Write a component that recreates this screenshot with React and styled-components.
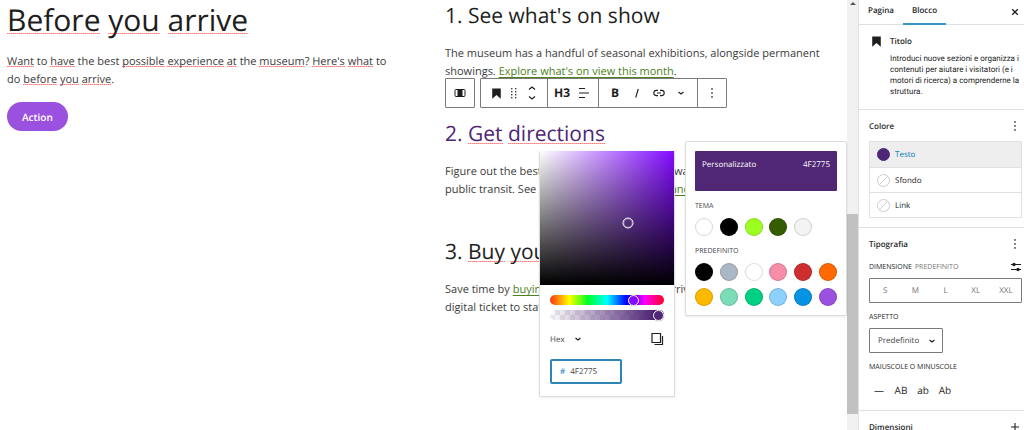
import React, { useState } from "react";
import styled, { createGlobalStyle, css } from "styled-components";

const Theme = {
  Ink: "#1e1e1e",
  Body: "#3c3c3c",
  Purple: "#4f2775",
  Action: "#9b51e0",
  Blue: "#007cba",
  Green: "#4c8020",
  Line: "#e0e0e0",
  Outline: "#7a7a7a",
  Grey: "#757575",
};

const GlobalStyle = createGlobalStyle`
  * {
    box-sizing: border-box;
  }

  body {
    margin: 0;
    overflow: hidden;
    background: #fff;
    color: ${Theme.Ink};
    font-family: "Open Sans", "Noto Sans", sans-serif;
    text-rendering: geometricPrecision;
  }

  h1, h2, h3, p, fieldset {
    margin: 0;
    padding: 0;
    border: 0;
  }

  button, input, select {
    margin: 0;
    padding: 0;
    border: 0;
    background: none;
    color: inherit;
    font: inherit;
    text-rendering: inherit;
  }
`;

const Editor = styled.div`
  display: flex;
  height: 100vh;
`;

const Canvas = styled.main`
  position: relative;
  flex: 1;
  display: grid;
  grid-template-columns: 1fr 1fr;
  gap: 56px;
  align-items: start;
  padding: 0 20px 0 7px;
`;

const Title = styled.h1`
  font-size: 30px;
  font-weight: 400;
  line-height: 40px;
`;

const Heading = styled.h2`
  position: relative;
  font-size: 21px;
  font-weight: 400;
  line-height: 30px;
  color: ${(props) => props.$color || Theme.Ink};
`;

const Paragraph = styled.p`
  margin-top: ${(props) => (props.$tight ? "13px" : "14px")};
  font-size: 11px;
  line-height: 18px;
  color: ${Theme.Body};

  & a {
    color: ${Theme.Green};
    text-underline-offset: 2px;
    text-decoration-skip-ink: none;
  }
`;

const Typo = styled.span`
  background: linear-gradient(to right, #ff7b7b 50%, #ffb0b0 50%) 0
    calc(100% - 0.2em) / 2px 1px repeat-x;
`;

const ActionButton = styled.button`
  margin-top: 13px;
  padding: 0 15px;
  height: 29px;
  border-radius: 15px;
  background: ${Theme.Action};
  color: #fff;
  font-size: 10px;
  font-weight: 600;
`;

const Steps = styled.div`
  display: grid;
  gap: 38px;
  padding-top: 1px;
`;

// toolbar

const Toolbar = styled.div`
  position: absolute;
  left: 0;
  bottom: 41px;
  display: flex;
  gap: 5px;
  color: ${Theme.Ink};
`;

const ToolbarBox = styled.div`
  display: flex;
  height: 30px;
  border: 1px solid ${Theme.Outline};
  border-radius: 1px;
  background: #fff;
`;

const ToolbarGroup = styled.div`
  display: flex;
  align-items: center;
  padding: 0 ${(props) => props.$pad || 3}px;

  & + & {
    border-left: 1px solid ${Theme.Outline};
  }
`;

const Tool = styled.button`
  display: flex;
  align-items: center;
  justify-content: center;
  width: ${(props) => (props.$narrow ? 18 : 22)}px;
  height: 28px;
  font-size: 12px;
  font-weight: 700;
  line-height: 28px;
`;

// popovers

const popover = css`
  position: absolute;
  border: 1px solid #dcdcdc;
  border-radius: 2px;
  background: #fff;
  box-shadow: 0 1px 3px rgba(0, 0, 0, 0.08);
`;

const Picker = styled.section`
  ${popover}
  top: 151px;
  right: 172px;
  width: 136px;
  border-top: 0;
`;

const Saturation = styled.div`
  position: relative;
  height: 134px;
  background: linear-gradient(to top, #000, transparent),
    linear-gradient(to right, #fff, transparent), #820cff;
`;

const Pointer = styled.span`
  position: absolute;
  width: 11px;
  height: 11px;
  border: 1px solid #fff;
  border-radius: 50%;
  box-shadow: inset 0 0 0 1px rgba(255, 255, 255, 0.3);
  transform: translate(-50%, -50%);
`;

const PickerBody = styled.div`
  display: grid;
  gap: 5px;
  padding: 10px 10px 12px;
`;

const Slider = styled.input`
  display: block;
  width: 100%;
  height: 10px;
  border-radius: 5px;
  appearance: none;
  background: ${(props) => props.$track};

  &::-webkit-slider-thumb {
    appearance: none;
    width: 11px;
    height: 11px;
    border: 1px solid #fff;
    border-radius: 50%;
    background: ${(props) => props.$thumb};
    box-shadow: 0 0 1px rgba(0, 0, 0, 0.5);
  }
`;

const hueTrack =
  "linear-gradient(to right, #f31 0%, #ff0 17%, #0f2 33%, #0ff 50%, #00f 67%, #f0f 83%, #f02 100%)";
const alphaTrack = `linear-gradient(to right, transparent, ${Theme.Purple} 90%), repeating-conic-gradient(#ebebeb 0 25%, #fff 0 50%) 0 0 / 10px 10px`;

const FormatRow = styled.div`
  display: flex;
  align-items: center;
  justify-content: space-between;
  margin-top: 7px;
  height: 14px;
`;

const CopyButton = styled.button`
  display: flex;
`;

const SelectBox = styled.span`
  display: inline-flex;
  align-items: center;
  gap: ${(props) => props.$gap || 0}px;
  font-size: 8px;

  & select {
    appearance: none;
    field-sizing: content;
    color: #444;
  }

  & svg {
    flex: none;
  }
`;

const HexField = styled.label`
  display: flex;
  align-items: center;
  gap: 5px;
  margin-top: 8px;
  padding: 0 8px;
  width: 72px;
  height: 25px;
  border: 2px solid #2f86b5;
  border-radius: 2px;
  font-size: 8px;
  color: ${Theme.Blue};

  & input {
    width: 100%;
    min-width: 0;
    color: #444;
  }
`;

const Palette = styled.section`
  ${popover}
  top: 141px;
  right: 0;
  width: 162px;
  padding: 9px;
`;

const CurrentColor = styled.div`
  display: flex;
  justify-content: space-between;
  padding: 8px 7px 0;
  height: 40px;
  border-radius: 1px;
  background: ${Theme.Purple};
  color: #fff;
  font-size: 8px;
  line-height: 12px;
`;

const Swatches = styled.fieldset`
  display: grid;
  grid-template-columns: repeat(6, 18px);
  justify-content: space-between;
  row-gap: 7px;

  & legend {
    padding: 11px 0 6px;
    font-size: 7px;
    line-height: 10px;
    color: #444;
  }
`;

const Swatch = styled.button`
  height: 18px;
  border-radius: 50%;
  background: ${(props) => props.$color};
  box-shadow: inset 0 0 0 1px rgba(0, 0, 0, 0.15);
`;

// scrollbar

const Scrollbar = styled.div`
  display: flex;
  flex-direction: column;
  width: 11px;
  background: #f1f1f1;

  &::before {
    content: "";
    align-self: center;
    margin-top: 2px;
    border: 3px solid transparent;
    border-top: 0;
    border-bottom: 3px solid #555;
  }
`;

const ScrollThumb = styled.div`
  margin-top: auto;
  margin-bottom: 16px;
  height: 46.5%;
  background: #c1c1c1;
`;

// sidebar

const Sidebar = styled.aside`
  width: 166px;
  border-left: 1px solid ${Theme.Line};
  overflow: hidden;
  font-size: 8px;
`;

const Tabs = styled.div`
  display: flex;
  align-items: center;
  height: 25px;
  padding-right: 3px;
  border-bottom: 1px solid ${Theme.Line};
`;

const Tab = styled.button`
  height: 25px;
  padding: 0 9px 2px;
  font-weight: 600;
  border-bottom: 2px solid ${(props) => (props.$active ? "#3a97c9" : "transparent")};
`;

const IconButton = styled.button`
  display: flex;
  align-items: center;
  justify-content: center;
  margin-left: auto;
  width: 12px;
  height: 12px;
`;

const BlockCard = styled.div`
  display: flex;
  gap: 8px;
  padding: 11px 0 12px 12px;
  border-bottom: 1px solid ${Theme.Line};
  line-height: 12px;

  & svg {
    flex: none;
  }

  & h2 {
    margin-bottom: 5px;
    font-size: 8px;
    font-weight: 600;
    line-height: 12px;
  }

  & p {
    font-family: Roboto, "Open Sans", sans-serif;
    line-height: 11px;
    font-size: 8px;
  }
`;

const Panel = styled.section`
  padding: 9px 2px 9px 10px;
  border-bottom: 1px solid ${Theme.Line};
`;

const PanelHeader = styled.div`
  display: flex;
  align-items: center;
  height: 14px;
  padding-right: 1px;

  & h2 {
    font-size: 8px;
    font-weight: 600;
  }
`;

const ColorList = styled.div`
  margin-top: 8px;
  border: 1px solid ${Theme.Line};
  border-radius: 1px;
`;

const ColorRow = styled.button`
  display: flex;
  align-items: center;
  gap: 5px;
  width: 100%;
  height: 25px;
  padding: 0 7px;
  background: ${(props) => (props.$active ? "#eee" : "#fff")};
  color: ${(props) => (props.$active ? Theme.Blue : Theme.Ink)};

  & + & {
    border-top: 1px solid ${Theme.Line};
  }
`;

const Indicator = styled.span`
  width: 13px;
  height: 13px;
  border-radius: 50%;
  border: 1px solid ${(props) => props.$color || "#ccc"};
  background: ${(props) =>
    props.$color ||
    "linear-gradient(135deg, transparent 47%, #ccc 47% 53%, transparent 53%)"};
`;

const Caption = styled.div`
  display: flex;
  align-items: center;
  gap: 3px;
  height: 12px;
  margin-top: ${(props) => props.$top || 8}px;
  font-size: 7px;
  font-weight: 500;
  text-transform: uppercase;

  & span {
    font-weight: 400;
    color: ${Theme.Grey};
  }
`;

const Sizes = styled.div`
  display: flex;
  margin-top: 5px;
  height: 25px;
  border: 1px solid ${Theme.Outline};
  border-radius: 1px;

  & button {
    flex: 1;
    color: ${Theme.Grey};
  }
`;

const AspectSelect = styled(SelectBox)`
  display: flex;
  width: 74px;
  height: 25px;
  margin-top: 5px;
  padding: 0 8px;
  border: 1px solid ${Theme.Outline};
  border-radius: 1px;
`;

const Cases = styled.div`
  display: flex;
  margin: 5px 0 0 -1px;

  & button {
    width: 22px;
    height: 23px;
    font-size: 10px;
    font-weight: 500;
  }
`;

const Bookmark = () => (
  <svg width="11" height="11" viewBox="0.5 0.5 9 9" aria-hidden="true">
    <path d="M1.5 1h7v8.2L5 6.3 1.5 9.2z" fill="currentColor" />
  </svg>
);

const Line = ({ w = 12, h = 12, d, stroke = 1.1 }) => (
  <svg
    width={w}
    height={h}
    viewBox={`0 0 ${w} ${h}`}
    fill="none"
    stroke="currentColor"
    strokeWidth={stroke}
    aria-hidden="true"
  >
    <path d={d} />
  </svg>
);

const Chevron = () => <Line w={8} h={8} d="M1.5 3 4 5 6.5 3" stroke={1.2} />;

const Dots = () => (
  <svg width="4" height="12" viewBox="0 0 4 12" fill="#444" aria-hidden="true">
    {[1, 5, 9].map((y) => (
      <rect key={y} x="1.2" y={y} width="1.6" height="1.8" rx="0.4" />
    ))}
  </svg>
);

const Settings = () => (
  <svg width="12" height="12" viewBox="0 0 12 12" aria-hidden="true">
    <path d="M1 3.5h10M1 8.5h10" stroke="currentColor" strokeWidth="1.1" />
    <circle cx="4" cy="3.5" r="1.7" fill="currentColor" />
    <circle cx="8" cy="8.5" r="1.7" fill="currentColor" />
  </svg>
);

// words between asterisks are flagged by the spell checker
const Spell = ({ children }) =>
  children
    .split("*")
    .map((part, i) => (i % 2 ? <Typo key={i}>{part}</Typo> : part));

const BlockToolbar = () => (
  <Toolbar role="toolbar" aria-label="Strumenti del blocco">
    <ToolbarBox>
      <ToolbarGroup $pad={3}>
        <Tool aria-label="Colonne">
          <svg width="12" height="10" viewBox="0 0 12 10" aria-hidden="true">
            <rect x="1" y="1.5" width="10" height="7" rx="1" fill="none" stroke="currentColor" />
            <rect x="3.5" y="1.5" width="5" height="7" fill="currentColor" />
          </svg>
        </Tool>
      </ToolbarGroup>
    </ToolbarBox>
    <ToolbarBox>
      <ToolbarGroup $pad={6}>
        <Tool $narrow aria-label="Titolo">
          <Bookmark />
        </Tool>
        <Tool $narrow aria-label="Trascina">
          <svg width="8" height="12" viewBox="0 0 8 12" fill="#444" aria-hidden="true">
            {[1, 4, 7, 10].map((y) =>
              [1, 5].map((x) => (
                <rect key={`${x}-${y}`} x={x} y={y} width="1.4" height="1.4" />
              ))
            )}
          </svg>
        </Tool>
        <Tool $narrow aria-label="Sposta">
          <Line w={10} h={16} d="M2 4.5 5 2l3 2.5M2 11.5 5 14l3-2.5" stroke={1.2} />
        </Tool>
      </ToolbarGroup>
      <ToolbarGroup>
        <Tool aria-label="Livello del titolo">H3</Tool>
        <Tool aria-label="Allinea">
          <Line d="M1 1.5h6M1 6h10M1 10.5h6" />
        </Tool>
      </ToolbarGroup>
      <ToolbarGroup $pad={5}>
        <Tool aria-label="Grassetto">B</Tool>
        <Tool aria-label="Corsivo">
          <Line w={8} h={10} d="M5.3 1 2.7 9.5" />
        </Tool>
        <Tool aria-label="Link">
          <Line d="M5 3.4H3.4a2.6 2.6 0 0 0 0 5.2H5M7 3.4h1.6a2.6 2.6 0 0 1 0 5.2H7M4 6h4" />
        </Tool>
        <Tool aria-label="Altro">
          <Chevron />
        </Tool>
      </ToolbarGroup>
      <ToolbarGroup>
        <Tool aria-label="Opzioni">
          <Dots />
        </Tool>
      </ToolbarGroup>
    </ToolbarBox>
  </Toolbar>
);

const ColorPicker = () => {
  const [hue, setHue] = useState(274);
  const [alpha, setAlpha] = useState(100);
  const [hex, setHex] = useState("4F2775");

  return (
    <Picker>
      <Saturation>
        <Pointer style={{ left: "66%", top: "54%" }} />
      </Saturation>
      <PickerBody>
        <Slider
          type="range"
          aria-label="Tonalità"
          min="0"
          max="360"
          value={hue}
          onChange={(e) => setHue(e.target.value)}
          $track={hueTrack}
          $thumb="#820cff"
        />
        <Slider
          type="range"
          aria-label="Trasparenza"
          value={alpha}
          onChange={(e) => setAlpha(e.target.value)}
          $track={alphaTrack}
          $thumb={Theme.Purple}
        />
        <FormatRow>
          <SelectBox $gap={9}>
            <select aria-label="Formato colore">
              <option>Hex</option>
            </select>
            <Chevron />
          </SelectBox>
          <CopyButton aria-label="Copia">
            <Line w={14} h={14} d="M2 1.5h8.5v9H2zM12.5 4v8.5H4.5" stroke={1.2} />
          </CopyButton>
        </FormatRow>
        <HexField>
          #
          <input
            aria-label="Colore esadecimale"
            value={hex}
            onChange={(e) => setHex(e.target.value)}
          />
        </HexField>
      </PickerBody>
    </Picker>
  );
};

const themeColors = ["#fff", "#000", "#9dff20", "#345c00", "#f3f3f3"];
const defaultColors = [
  "#000",
  "#abb8c3",
  "#fff",
  "#f78da7",
  "#cf2e2e",
  "#ff6900",
  "#fcb900",
  "#7bdcb5",
  "#00d084",
  "#8ed1fc",
  "#0693e3",
  "#9b51e0",
];

const SwatchGroup = ({ label, colors }) => (
  <Swatches>
    <legend>{label}</legend>
    {colors.map((color) => (
      <Swatch key={color} $color={color} aria-label={color} />
    ))}
  </Swatches>
);

const colorRows = [
  { label: "Testo", color: Theme.Purple },
  { label: "Sfondo" },
  { label: "Link" },
];

const BlockSettings = () => (
  <Sidebar>
    <Tabs>
      <Tab>Pagina</Tab>
      <Tab $active>Blocco</Tab>
      <IconButton aria-label="Chiudi">
        <Line w={8} h={8} d="M1.2 1.2l5.6 5.6M6.8 1.2l-5.6 5.6" stroke={1.3} />
      </IconButton>
    </Tabs>
    <BlockCard>
      <Bookmark />
      <div>
        <h2>Titolo</h2>
        <p>
          Introduci nuove sezioni e organizza i contenuti per aiutare i
          visitatori (e i motori di ricerca) a comprenderne la struttura.
        </p>
      </div>
    </BlockCard>
    <Panel>
      <PanelHeader>
        <h2>Colore</h2>
        <IconButton aria-label="Opzioni colore">
          <Dots />
        </IconButton>
      </PanelHeader>
      <ColorList>
        {colorRows.map(({ label, color }) => (
          <ColorRow key={label} $active={!!color}>
            <Indicator $color={color} />
            {label}
          </ColorRow>
        ))}
      </ColorList>
    </Panel>
    <Panel>
      <PanelHeader>
        <h2>Tipografia</h2>
        <IconButton aria-label="Opzioni tipografia">
          <Dots />
        </IconButton>
      </PanelHeader>
      <Caption $top={10}>
        Dimensione <span>Predefinito</span>
        <IconButton aria-label="Dimensione personalizzata">
          <Settings />
        </IconButton>
      </Caption>
      <Sizes>
        {["S", "M", "L", "XL", "XXL"].map((size) => (
          <button key={size}>{size}</button>
        ))}
      </Sizes>
      <Caption as="label" htmlFor="aspect">
        Aspetto
      </Caption>
      <AspectSelect $gap={9}>
        <select id="aspect">
          <option>Predefinito</option>
        </select>
        <Chevron />
      </AspectSelect>
      <Caption>Maiuscole o minuscole</Caption>
      <Cases>
        {["—", "AB", "ab", "Ab"].map((label) => (
          <button key={label}>{label}</button>
        ))}
      </Cases>
    </Panel>
    <Panel>
      <PanelHeader>
        <h2>Dimensioni</h2>
        <IconButton aria-label="Aggiungi">
          <Line w={10} h={10} d="M5 1v8M1 5h8" />
        </IconButton>
      </PanelHeader>
    </Panel>
  </Sidebar>
);

const App = () => (
  <>
    <GlobalStyle />
    <Editor>
      <Canvas>
        <div>
          <Title>
            <Spell>*Before* *you* *arrive*</Spell>
          </Title>
          <Paragraph $tight>
            <Spell>
              *Want* to *have* the best *possible* *experience* *at* the *museum*? *Here's* *what* to do *before* *you* *arrive*.
            </Spell>
          </Paragraph>
          <ActionButton>Action</ActionButton>
        </div>
        <Steps>
          <div>
            <Heading>1. See what's on show</Heading>
            <Paragraph>
              The museum has a handful of seasonal exhibitions, alongside
              permanent showings.{" "}
              <a href="#view">Explore what's on view this month</a>.
            </Paragraph>
          </div>
          <div>
            <Heading $color={Theme.Purple}>
              <BlockToolbar />
              <Spell>2. *Get* *directions*</Spell>
            </Heading>
            <Paragraph>
              Figure out the best way to get here by car or walking, cycling or
              taking public transit. See all directions and the{" "}
              <a href="#entrance">entrances</a>.
            </Paragraph>
          </div>
          <div>
            <Heading>
              <Spell>3. *Buy* *your* *tickets*</Spell>
            </Heading>
            <Paragraph>
              Save time by <a href="#buy">buying your ticket</a> before you
              arrive, then just show your digital ticket to staff.
            </Paragraph>
          </div>
        </Steps>
        <ColorPicker />
        <Palette>
          <CurrentColor>
            <span>Personalizzato</span>
            <span>4F2775</span>
          </CurrentColor>
          <SwatchGroup label="TEMA" colors={themeColors} />
          <SwatchGroup label="PREDEFINITO" colors={defaultColors} />
        </Palette>
      </Canvas>
      <Scrollbar>
        <ScrollThumb />
      </Scrollbar>
      <BlockSettings />
    </Editor>
  </>
);

export default App;
